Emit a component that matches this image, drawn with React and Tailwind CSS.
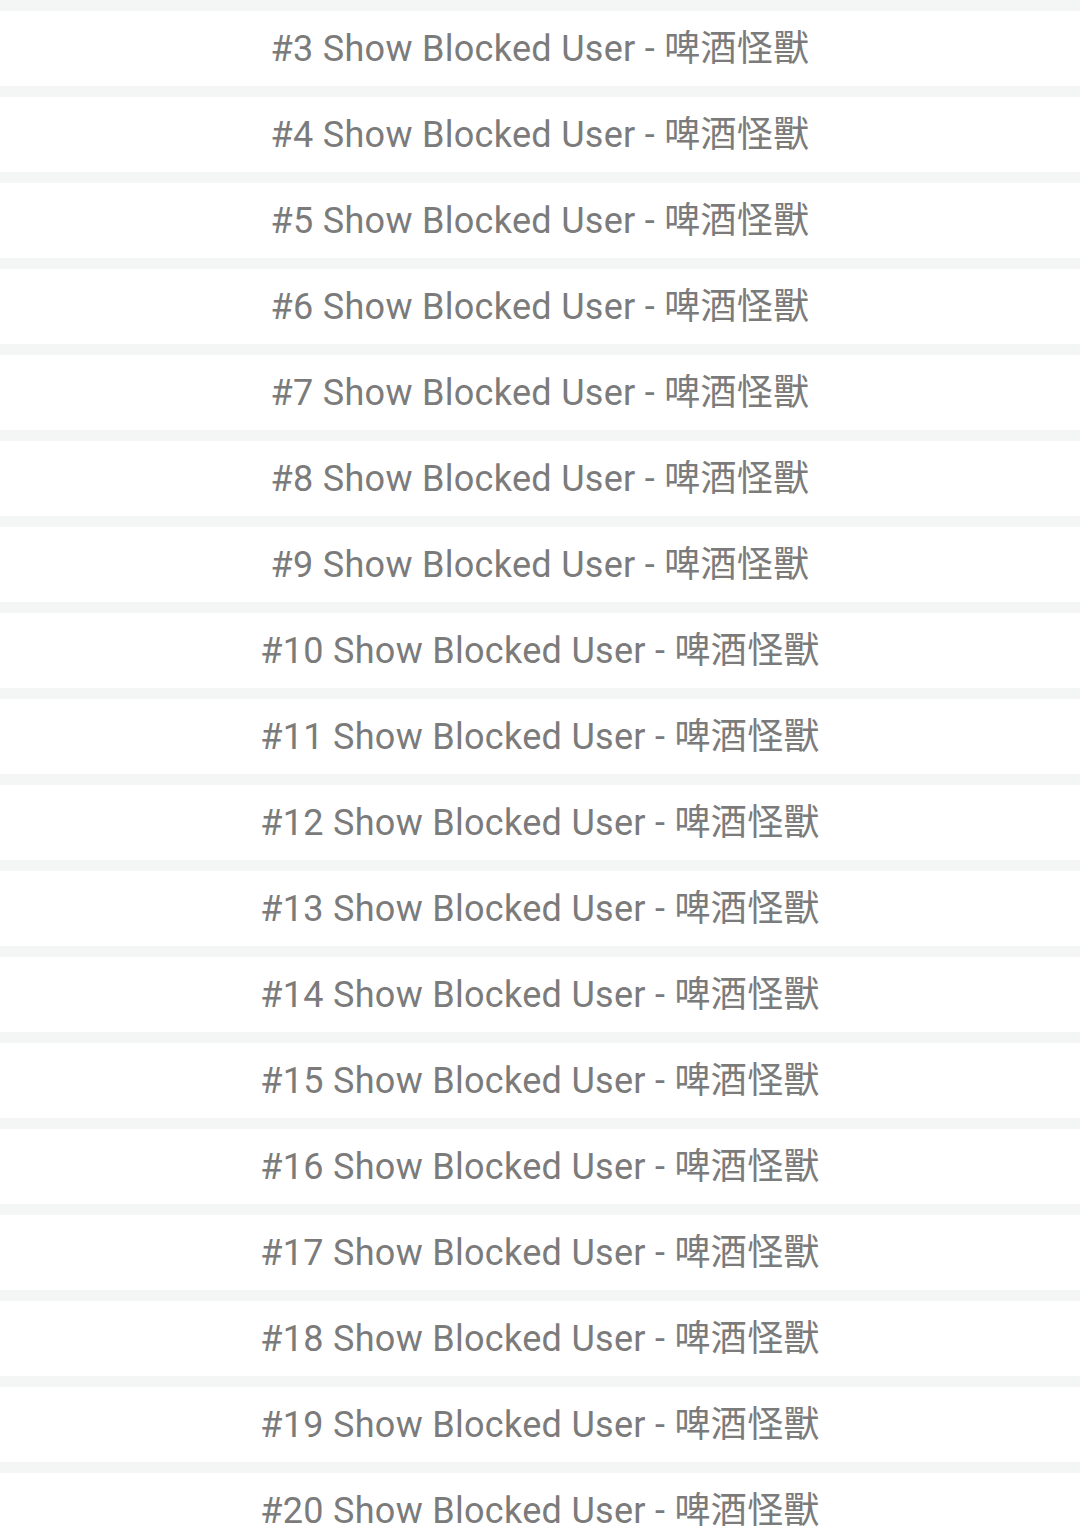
export default function App() {
  const rows = [];
  for (let i = 3; i <= 20; i++) rows.push(i);
  return (
    <div className="w-[1080px] h-[1538px] overflow-hidden bg-[#f4f5f5] pt-[11px] flex flex-col gap-[11px]" style={{ fontFamily: "Roboto, 'Noto Sans CJK TC', sans-serif" }}>
      {rows.map((n) => (
        <div key={n} className="h-[75px] shrink-0 bg-white flex items-center justify-center text-[36px] tracking-[0.3px] text-[#7b7b7b]">
          #{n} Show Blocked User - 啤酒怪獸
        </div>
      ))}
    </div>
  );
}
